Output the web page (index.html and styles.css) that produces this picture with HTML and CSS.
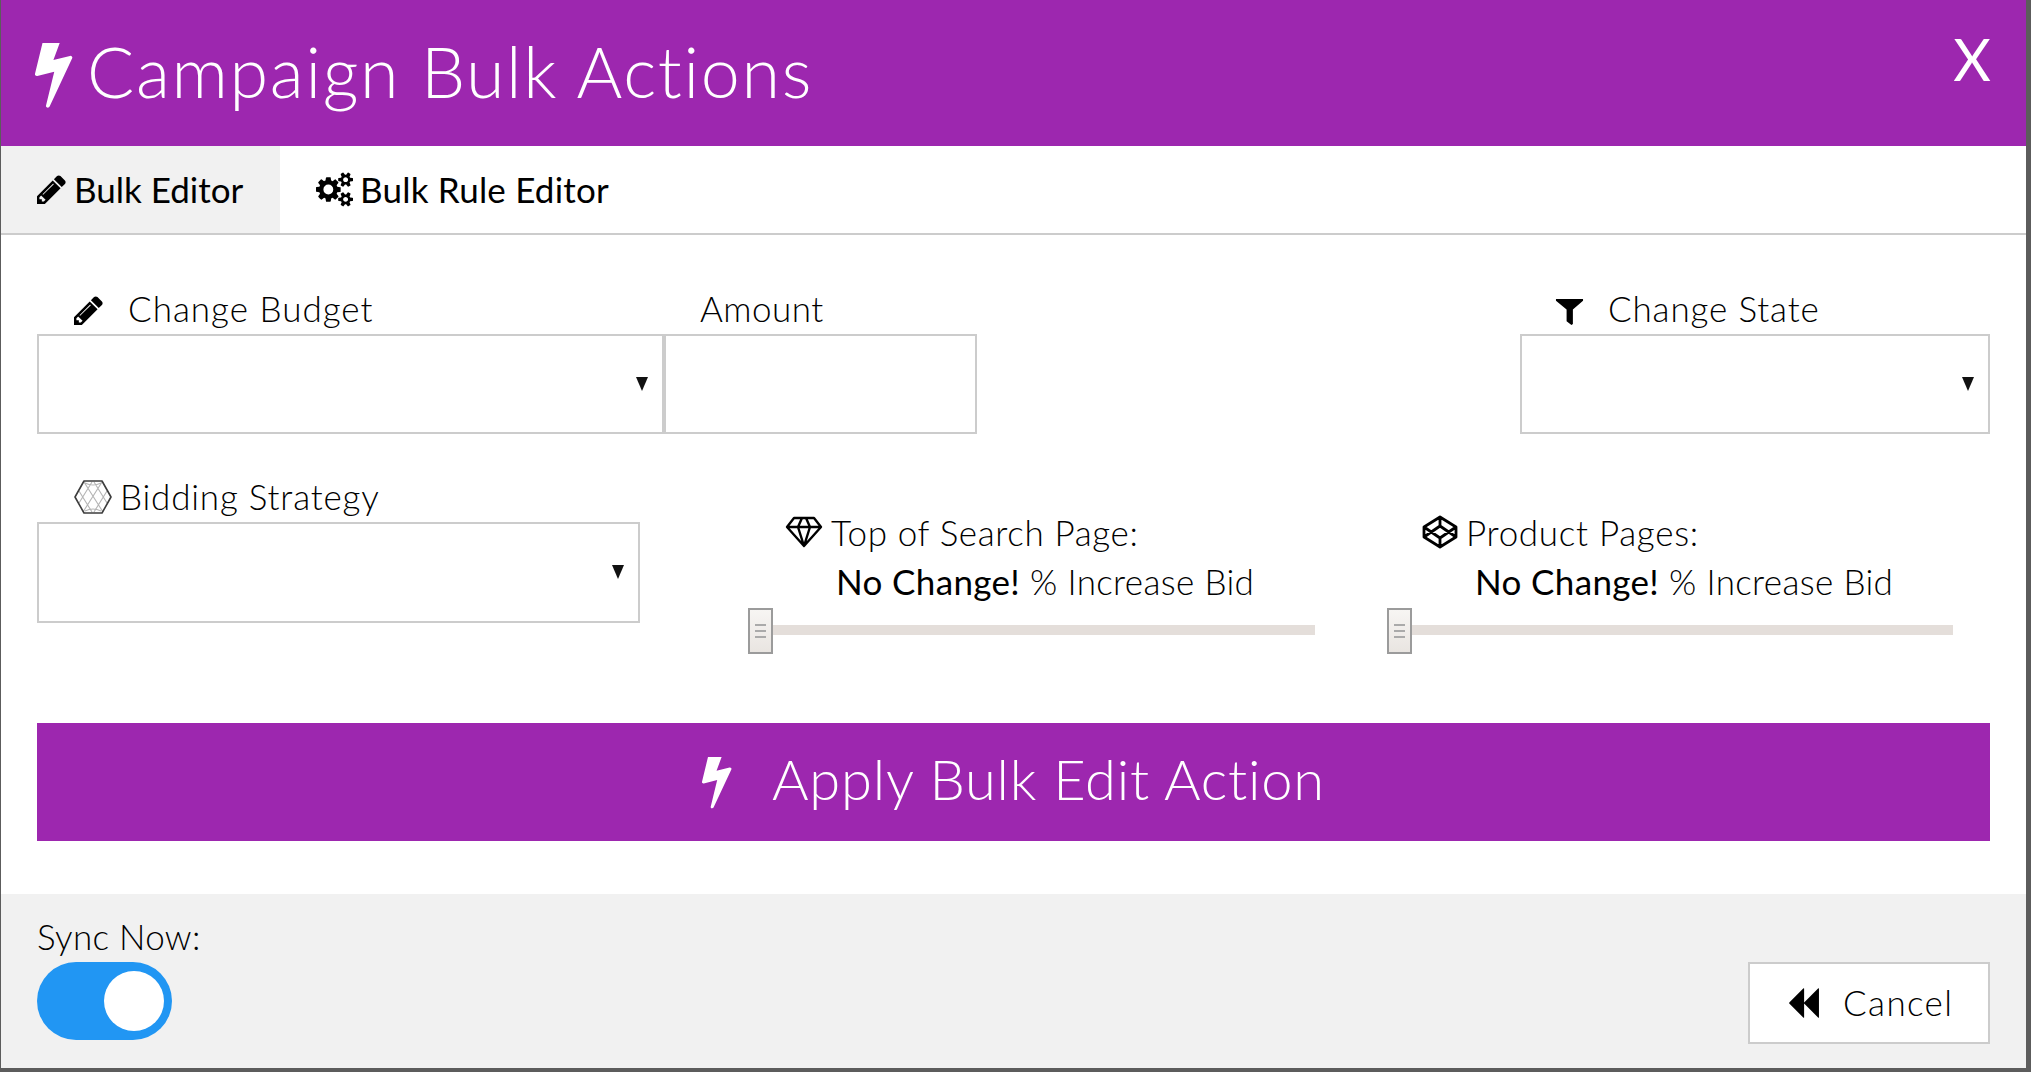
FILE: index.html
```html
<!DOCTYPE html>
<html lang="en">
<head>
<meta charset="utf-8">
<title>Campaign Bulk Actions</title>
<link rel="stylesheet" href="styles.css">
</head>
<body>
<svg class="defs" aria-hidden="true">
  <symbol id="bolt" viewBox="450 250 910 1545"><path fill="currentColor" d="M1333 566q18 20 7 44l-540 1157q-13 25-42 25-4 0-14-2-17-5-25.5-19t-4.5-30l197-808-406 101q-4 1-12 1-18 0-31-11-18-15-13-39l201-825q4-14 16-23t28-9h328q19 0 32 12.5t13 29.5q0 8-5 18l-171 463 396-98q8-2 12-2 19 0 34 15z"/></symbol>
  <symbol id="pencil" viewBox="128 128 1536 1536"><path fill="currentColor" d="M491 1536l91-91-235-235-91 91v107h128v128h107zm523-928q0-22-22-22-10 0-17 7l-542 542q-7 7-7 17 0 22 22 22 10 0 17-7l542-542q7-7 7-17zm-54-192l416 416-832 832h-416v-416zm683 96q0 53-37 90l-166 166-416-416 166-165q36-38 90-38 53 0 91 38l235 234q37 39 37 91z"/></symbol>
  <symbol id="cogs" viewBox="0 0 1920 1792"><path fill="currentColor" d="M896 896q0-106-75-181t-181-75-181 75-75 181 75 181 181 75 181-75 75-181zm768 512q0-52-38-90t-90-38-90 38-38 90q0 53 37.5 90.5t90.5 37.5 90.5-37.5 37.5-90.5zm0-1024q0-52-38-90t-90-38-90 38-38 90q0 53 37.5 90.5t90.5 37.5 90.5-37.5 37.5-90.5zm-384 421v185q0 10-7 19.5t-16 10.5l-155 24q-11 35-32 76 34 48 90 115 7 11 7 20 0 12-7 19-23 30-82.5 89.5t-78.5 59.5q-11 0-21-7l-115-90q-37 19-77 31-11 108-23 155-7 24-30 24h-186q-11 0-20-7.5t-10-17.5l-23-153q-34-10-75-31l-118 89q-7 7-20 7-11 0-21-8-144-133-144-160 0-9 7-19 10-14 41-53t47-61q-23-44-35-82l-152-24q-10-1-17-9.5t-7-19.5v-185q0-10 7-19.5t16-10.5l155-24q11-35 32-76-34-48-90-115-7-11-7-20 0-12 7-20 22-30 82-89t79-59q11 0 21 7l115 90q34-18 77-32 11-108 23-154 7-24 30-24h186q11 0 20 7.5t10 17.5l23 153q34 10 75 31l118-89q8-7 20-7 11 0 21 8 144 133 144 160 0 8-7 19-12 16-42 54t-45 60q23 48 34 82l152 23q10 2 17 10.5t7 19.5zm640 533v140q0 16-149 31-12 27-30 52 51 113 51 138 0 4-4 7-122 71-124 71-8 0-46-47t-52-68q-20 2-30 2t-30-2q-14 21-52 68t-46 47q-2 0-124-71-4-3-4-7 0-25 51-138-18-25-30-52-149-15-149-31v-140q0-16 149-31 13-29 30-52-51-113-51-138 0-4 4-7 4-2 35-20t59-34 30-16q8 0 46 46.5t52 67.5q20-2 30-2t30 2q51-71 92-112l6-2q4 0 124 70 4 3 4 7 0 25-51 138 17 23 30 52 149 15 149 31zm0-1024v140q0 16-149 31-12 27-30 52 51 113 51 138 0 4-4 7-122 71-124 71-8 0-46-47t-52-68q-20 2-30 2t-30-2q-14 21-52 68t-46 47q-2 0-124-71-4-3-4-7 0-25 51-138-18-25-30-52-149-15-149-31v-140q0-16 149-31 13-29 30-52-51-113-51-138 0-4 4-7 4-2 35-20t59-34 30-16q8 0 46 46.5t52 67.5q20-2 30-2t30 2q51-71 92-112l6-2q4 0 124 70 4 3 4 7 0 25-51 138 17 23 30 52 149 15 149 31z"/></symbol>
  <symbol id="filter" viewBox="0 0 30 30"><path fill="currentColor" d="M1 3h28v2L18.5 14v15l-1.5 1-5-4V14L1 5z"/></symbol>
  <symbol id="backward" viewBox="230 120 1500 1552"><path fill="currentColor" d="M1683 141q19-19 32-13t13 32v1472q0 26-13 32t-32-13l-710-710q-9-9-13-19v710q0 26-13 32t-32-13l-710-710q-19-19-19-45t19-45l710-710q19-19 32-13t13 32v710q4-10 13-19z"/></symbol>
  <symbol id="diamond" viewBox="0 0 38 32"><path fill="none" stroke="currentColor" stroke-width="2.4" stroke-linejoin="round" d="M9 2h20l7 9-17 19L2 11zM2 11h34M13 11l6 19 6-19M13 11l4-9M25 11l-4-9"/></symbol>
  <symbol id="codepen" viewBox="0 0 36 34"><path fill="none" stroke="currentColor" stroke-width="2.8" stroke-linejoin="round" d="M18 2l16 10v10L18 32 2 22V12zM18 2v9M18 23v9M2 12l16 11 16-11M2 22l16-11 16 11"/></symbol>
  <symbol id="hexagon" viewBox="0 0 38 36"><path fill="none" stroke="#b5b5b5" stroke-width="1.1" d="M10 3l19 30M28 3L9 33M18 3L5 24M20 3l13 21M18 33L5 12M20 33l13-21M3 18h0M11 4q8 4 16 0M11 32q8-4 16 0"/><path fill="none" stroke="#3d3d3d" stroke-width="1.6" stroke-linejoin="round" d="M10 2h18l9 16-9 16H10L1 18z"/></symbol>
</svg>

<main class="modal">
  <header class="modal-head">
    <svg class="icon bolt-title"><use href="#bolt"/></svg>
    <h1 class="title">Campaign Bulk Actions</h1>
    <span class="close">X</span>
  </header>

  <nav class="tabs">
    <a class="tab tab-active"><svg class="icon tab-pencil"><use href="#pencil"/></svg><span class="tab-text">Bulk Editor</span></a>
    <a class="tab tab-rules"><svg class="icon tab-cogs"><use href="#cogs"/></svg><span class="tab-text tab-text-b">Bulk Rule Editor</span></a>
  </nav>

  <section class="content">
    <div class="row-one">
      <div class="field field-budget">
        <label class="label label-budget"><svg class="icon pencil-sm"><use href="#pencil"/></svg><span class="lt-budget">Change Budget</span></label>
        <div class="select-wrap"><select class="control"></select><i class="caret"></i></div>
      </div>
      <div class="field field-amount">
        <label class="label label-amount"><span class="lt-amount">Amount</span></label>
        <input class="control" type="text">
      </div>
      <div class="field field-state">
        <label class="label label-state"><svg class="icon filter-sm"><use href="#filter"/></svg><span class="lt-state">Change State</span></label>
        <div class="select-wrap"><select class="control"></select><i class="caret"></i></div>
      </div>
    </div>

    <div class="row-two">
      <div class="field field-bidding">
        <label class="label label-bidding"><svg class="icon hex-sm"><use href="#hexagon"/></svg><span class="lt-bidding">Bidding Strategy</span></label>
        <div class="select-wrap"><select class="control control-b"></select><i class="caret"></i></div>
      </div>
      <div class="slider-col slider-col-a">
        <div class="label slider-title-a"><svg class="icon gem"><use href="#diamond"/></svg><span class="lt-top">Top of Search Page:</span></div>
        <div class="slider-value"><b>No Change!</b> % Increase Bid</div>
        <div class="slider"><span class="handle"><i></i><i></i><i></i></span><span class="track"></span></div>
      </div>
      <div class="slider-col slider-col-b">
        <div class="label slider-title-b"><svg class="icon pen"><use href="#codepen"/></svg><span class="lt-prod">Product Pages:</span></div>
        <div class="slider-value"><b>No Change!</b> % Increase Bid</div>
        <div class="slider"><span class="handle"><i></i><i></i><i></i></span><span class="track"></span></div>
      </div>
    </div>

    <button class="apply" type="button"><svg class="icon bolt-btn"><use href="#bolt"/></svg><span class="apply-text">Apply Bulk Edit Action</span></button>
  </section>

  <footer class="modal-foot">
    <div class="sync">
      <div class="sync-label">Sync Now:</div>
      <span class="toggle"><span class="knob"></span></span>
    </div>
    <button class="cancel" type="button"><svg class="icon back"><use href="#backward"/></svg><span class="cancel-text">Cancel</span></button>
  </footer>
</main>
</body>
</html>
```

FILE: styles.css
```css
* { box-sizing: border-box; }
html, body { margin: 0; height: 100%; }
body {
  width: 2031px;
  height: 1072px;
  overflow: hidden;
  background: #5c5c5c;
  font-family: Lato, "Open Sans", sans-serif;
  font-weight: 300;
  color: #000;
}
.defs { display: none; }
.icon { display: block; flex: none; }

.modal {
  display: flex;
  flex-direction: column;
  width: 2025px;
  height: 1068px;
  margin-left: 1px;
  background: #fff;
}

.modal-head {
  display: flex;
  align-items: center;
  height: 146px;
  padding: 0 35px 0 34px;
  background: #9d27af;
  color: #fff;
}
.bolt-title { width: 38px; height: 65px; margin: 4px 14px 0 0; }
.title { flex: 1; margin: 0 0 5px; font-size: 70px; font-weight: 300; letter-spacing: 1.67px; line-height: 1; }
.close { align-self: flex-start; margin-top: 25px; font-size: 58px; font-weight: 400; line-height: 68px; }

.tabs { display: flex; height: 89px; border-bottom: 2px solid #ccc; }
.tab { display: flex; align-items: center; font-size: 35px; font-weight: 400; }
.tab-active { width: 279px; padding-left: 36px; background: #f1f1f1; }
.tab-rules { padding-left: 36px; }
.tab-pencil { width: 29px; height: 29px; margin-right: 8px; }
.tab-cogs { width: 37px; height: 35px; margin-right: 7px; }
.tab-text { padding-bottom: 2px; }
.tab-text-b { letter-spacing: .2px; }

.content { flex: 1; padding: 56px 36px 0; }

.label { display: flex; align-items: center; height: 38px; margin-bottom: 5px; font-size: 35px; }
.field .label span { padding-bottom: 4px; }

.row-one { display: flex; }
.field-budget { width: 627px; }
.field-amount { width: 313px; }
.field-state { width: 470px; margin-left: auto; }
.label-budget { padding-left: 37px; }
.label-amount { padding-left: 36px; }
.label-state { padding-left: 35px; }
.pencil-sm { width: 29px; height: 29px; margin-right: 25px; }
.filter-sm { width: 29px; height: 29px; margin-right: 24px; }
.hex-sm { width: 38px; height: 36px; margin: 0 8px 3px 0; }
.lt-budget { letter-spacing: 1px; }
.lt-amount { letter-spacing: .5px; }
.lt-state { letter-spacing: .85px; }
.lt-bidding { letter-spacing: .8px; }
.lt-top { letter-spacing: .63px; }
.lt-prod { letter-spacing: .7px; }

.select-wrap { position: relative; }
.control {
  display: block;
  width: 100%;
  height: 100px;
  border: 2px solid #ccc;
  border-radius: 0;
  background: #fff;
  appearance: none;
  outline: none;
}
.caret {
  position: absolute;
  top: 43px;
  right: 16px;
  width: 0;
  height: 0;
  border-left: 6px solid transparent;
  border-right: 6px solid transparent;
  border-top: 14px solid #111;
}

.row-two { display: flex; margin-top: 45px; }
.field-bidding { width: 603px; margin-right: 108px; }
.slider-col-a { width: 567px; margin-right: 72px; }
.slider-col-b { width: 566px; }
.control-b { height: 101px; }
.label-bidding { padding-left: 37px; }

.slider-col { padding-top: 34px; }
.slider-title-a { padding-left: 37px; }
.slider-title-b { padding-left: 35px; }
.gem { width: 38px; height: 32px; margin-right: 8px; }
.pen { width: 36px; height: 34px; margin-right: 8px; }
.slider-value { height: 50px; padding-left: 88px; font-size: 35px; line-height: 50px; letter-spacing: .35px; margin-top: 1px; }
.slider-value b { font-weight: 400; }

.slider { display: flex; align-items: center; height: 46px; margin-top: 2px; }
.handle {
  display: flex;
  flex-direction: column;
  align-items: center;
  justify-content: center;
  gap: 4px;
  flex: none;
  width: 25px;
  height: 46px;
  border: 2px solid #9b9b9b;
  background: linear-gradient(#f7f5f3, #e9e5e1);
}
.handle i { display: block; width: 11px; height: 2px; background: #aaa; }
.track { flex: 1; height: 10px; margin-bottom: 2px; background: #e4deda; }

.apply {
  display: flex;
  align-items: center;
  justify-content: center;
  width: 100%;
  height: 118px;
  margin-top: 69px;
  padding: 0;
  border: 0;
  background: #9d27af;
  color: #fff;
  font-family: inherit;
  font-weight: 300;
  font-size: 56px;
  letter-spacing: .8px;
}
.bolt-btn { width: 30px; height: 52px; margin: 2px 40px 0 0; }
.apply-text { padding-bottom: 8px; }

.modal-foot {
  display: flex;
  align-items: flex-end;
  justify-content: space-between;
  height: 174px;
  padding: 0 36px 24px;
  background: #f1f1f1;
}
.sync { display: flex; flex-direction: column; padding-bottom: 4px; }
.sync-label { font-size: 35px; line-height: 40px; letter-spacing: .3px; margin-bottom: 6px; }
.toggle {
  display: flex;
  justify-content: flex-end;
  align-items: center;
  width: 135px;
  height: 78px;
  padding-right: 8px;
  border-radius: 39px;
  background: #2196f3;
}
.knob { width: 60px; height: 60px; border-radius: 50%; background: #fff; }
.cancel {
  display: flex;
  align-items: center;
  width: 242px;
  height: 82px;
  padding: 0 0 0 39px;
  border: 2px solid #ccc;
  background: #fff;
  color: #000;
  font-family: inherit;
  font-weight: 300;
  font-size: 35px;
  letter-spacing: 1.4px;
}
.back { width: 31px; height: 30px; margin-right: 23px; }
.cancel-text { padding-bottom: 2px; }
```
